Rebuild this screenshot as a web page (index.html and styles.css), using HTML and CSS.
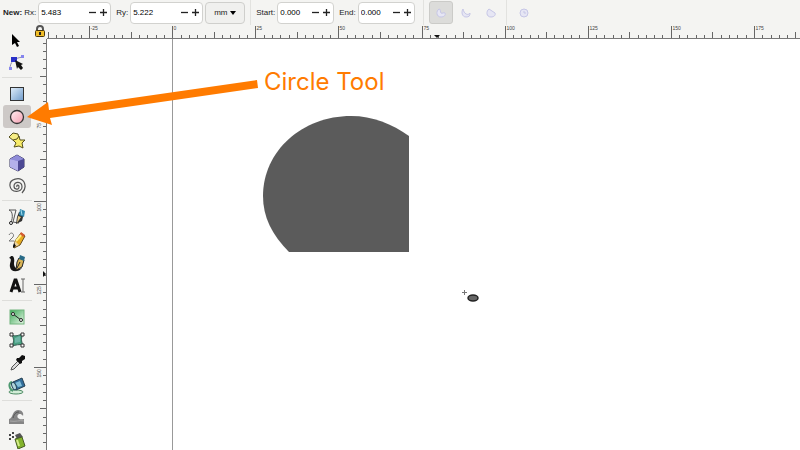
FILE: index.html
```html
<!DOCTYPE html>
<html lang="en">

<head>
	<title>Circle Tool</title>
	<meta charset="UTF-8">
	<meta name="viewport" content="width=device-width, initial-scale=1.0">
	<link rel="stylesheet" href="styles.css">
</head>

<body>
	<div class="app">
		<form class="options">
			<b class="mode">New:</b>
			<label for="rx">Rx:</label>
			<div class="spin wide">
				<input type="text" id="rx" value="5.483">
				<button type="button" aria-label="Decrease Rx"><svg viewBox="0 0 9 9"><path d="M1 4.5h7" /></svg></button>
				<button type="button" aria-label="Increase Rx"><svg viewBox="0 0 9 9"><path d="M1 4.5h7M4.5 1v7" /></svg></button>
			</div>
			<label for="ry">Ry:</label>
			<div class="spin wide">
				<input type="text" id="ry" value="5.222">
				<button type="button" aria-label="Decrease Ry"><svg viewBox="0 0 9 9"><path d="M1 4.5h7" /></svg></button>
				<button type="button" aria-label="Increase Ry"><svg viewBox="0 0 9 9"><path d="M1 4.5h7M4.5 1v7" /></svg></button>
			</div>
			<div class="unit">
				<select aria-label="Unit">
					<option>mm</option>
					<option>px</option>
				</select>
				<svg viewBox="0 0 6 4"><path d="M0 0h6L3 4z" /></svg>
			</div>
			<span class="divider"></span>
			<label for="start">Start:</label>
			<div class="spin">
				<input type="text" id="start" value="0.000">
				<button type="button" aria-label="Decrease start"><svg viewBox="0 0 9 9"><path d="M1 4.5h7" /></svg></button>
				<button type="button" aria-label="Increase start"><svg viewBox="0 0 9 9"><path d="M1 4.5h7M4.5 1v7" /></svg></button>
			</div>
			<label for="end">End:</label>
			<div class="spin">
				<input type="text" id="end" value="0.000">
				<button type="button" aria-label="Decrease end"><svg viewBox="0 0 9 9"><path d="M1 4.5h7" /></svg></button>
				<button type="button" aria-label="Increase end"><svg viewBox="0 0 9 9"><path d="M1 4.5h7M4.5 1v7" /></svg></button>
			</div>
			<span class="divider"></span>
			<div class="arcs">
				<button type="button" class="arc active" aria-label="Slice"><svg viewBox="0 0 10 10"><path d="M3 1C0 3 0 9 5 9c3 0 5-2 4-4-1-1-3 1-4 0S5 1 3 1z" /></svg></button>
				<button type="button" class="arc" aria-label="Arc"><svg viewBox="0 0 10 10"><path d="M2 1C0 4 1 9 5 9c3 0 4-1 4-4C7 8 3 6 2 1z" /></svg></button>
				<button type="button" class="arc" aria-label="Chord"><svg viewBox="0 0 10 10"><path d="M3 1C0 3 0 9 5 9c3 0 5-2 4-4z" /></svg></button>
			</div>
			<span class="divider"></span>
			<button type="button" class="arc" aria-label="Make whole"><svg viewBox="0 0 10 10"><circle cx="5" cy="5" r="4" /><path d="M5 3v2h2" /></svg></button>
		</form>

		<nav class="tools">
			<button class="tool" aria-label="Selector"><svg viewBox="0 0 18 18"><path d="M4 3l8 8-3 0 2 4-2 1-2-4-3 2z" fill="#000" /></svg></button>
			<button class="tool" aria-label="Node tool"><svg viewBox="0 0 18 18"><path d="M2 15C2 8 6 4 15 3" fill="none" stroke="#8a8ab0" /><path d="M3 3h6v5H3z" fill="#2930c8" /><path d="M1 13h3v3H1zM13 1h3v3h-3z" fill="#8585ef" /><path d="M7 6l8 4-2 1 2 3-2 2-3-3-1 2z" fill="#111" /></svg></button>
			<span class="line"></span>
			<button class="tool" aria-label="Rectangle tool"><svg viewBox="0 0 18 18"><rect x="2.500" y="2.500" width="13" height="13" fill="url(#blue)" stroke="#333" /></svg></button>
			<button class="tool active" aria-label="Circle tool"><svg viewBox="0 0 18 18"><circle cx="9" cy="9" r="6.500" fill="url(#pink)" stroke="#333" stroke-width="1.300" /></svg></button>
			<button class="tool" aria-label="Star tool"><svg viewBox="0 0 18 18"><path d="M5 2l5 1 1 5-5 2-5-4z" fill="#f7ee85" stroke="#55501c" /><path d="M11 5l1 4 5 0-3 3 1 5-4-2-5 1 2-4-3-3 4-1z" fill="#f8ec6a" stroke="#55501c" /></svg></button>
			<button class="tool" aria-label="3D box tool"><svg viewBox="0 0 18 18"><path d="M9 1l7 4v8l-6 4-8-4V5z" fill="#8582d2" stroke="#35335f" /><path d="M2 5l8 2v10l-8-4z" fill="#b3b0ea" /><path d="M2 5l7-4 7 4-6 2z" fill="#8f8cd8" /><path d="M10 7l6-2v8l-6 4z" fill="#4d4994" /></svg></button>
			<button class="tool" aria-label="Spiral tool"><svg viewBox="0 0 18 18"><path d="M9 10C8 8 11 7 11 10C11 13 6 13 6 9C6 4 14 4 14 10C14 16 3 16 2 9C1 2 12 -1 16 5C18 9 17 13 14 16" fill="none" stroke="#555" stroke-width="1.200" /></svg></button>
			<span class="line"></span>
			<button class="tool" aria-label="Pen tool"><svg viewBox="0 0 18 18"><path d="M1 2h7L5 14l6 1M1 2c4 1 4 8 2 12" fill="none" stroke="#555" /><circle cx="3" cy="15" r="1.500" fill="#fff" stroke="#222" /><path d="M11 4l5 1-2 8-6 3 1-7z" fill="#333" /><path d="M10 8l3 1-4 6z" fill="#eed28d" /><path d="M12 1l5 2-1 6-5-2z" fill="#3289ad" /><path d="M13 2l1 5" stroke="#a5dced" /></svg></button>
			<button class="tool" aria-label="Pencil tool"><svg viewBox="0 0 18 18"><path d="M1 4c2-4 6-1 4 2L1 10h5" fill="none" stroke="#777" /><path d="M7 10l6-8 4 3-5 9-6 3z" fill="#e8ae20" stroke="#654a20" /><path d="M8 10l6-7" stroke="#fff18b" stroke-width="2" /><path d="M13 1l4 3-2 2-3-3z" fill="#d65c32" /><path d="M7 10l4 4-5 2z" fill="#ecd4a0" /><path d="M5 15l1-3 2 3-3 2z" fill="#111" /></svg></button>
			<button class="tool" aria-label="Calligraphy tool"><svg viewBox="0 0 18 18"><path d="M1 4c4-5 6 0 5 5 0 4 2 7 8 5-3 4-11 5-12-1C1 9 5 5 1 4z" fill="#151515" /><path d="M11 4l5 2-2 7-6 3 1-8z" fill="#d9b456" stroke="#222" /><path d="M12 1l5 2-1 4-5-2z" fill="#286b88" /><path d="M9 14l3-6" stroke="#222" /></svg></button>
			<button class="tool" aria-label="Text tool"><svg viewBox="0 0 18 18"><path d="M3 15l4-12h1l4 12M4 11h7" fill="none" stroke="#111" stroke-width="3" /><path d="M13 2h4M15 2v13M13 15h4" fill="none" stroke="#666" /></svg></button>
			<span class="line"></span>
			<button class="tool" aria-label="Gradient tool"><svg viewBox="0 0 18 18"><rect x="2" y="2" width="14" height="14" fill="url(#green)" stroke="#70b47c" /><path d="M5 6l8 6" stroke="#222" /><circle cx="5" cy="6" r="1.500" fill="#fff" stroke="#222" /><circle cx="13" cy="12" r="1.500" fill="#fff" stroke="#222" /></svg></button>
			<button class="tool" aria-label="Mesh tool"><svg viewBox="0 0 18 18"><path d="M4 4c4 2 6 0 11-1-2 4-2 7 0 11-4-1-7 0-11 1 2-4 2-7 0-11z" fill="#49a181" stroke="#315a50" /><path d="M7 7l5-2v6l-5 1z" fill="#6fb5a6" /><path d="M2 2h3v3H2zM13 2h3v3h-3zM2 13h3v3H2zM13 13h3v3h-3z" fill="#fff" stroke="#333" /></svg></button>
			<button class="tool" aria-label="Dropper tool"><svg viewBox="0 0 18 18"><path d="M3 16l1-3 7-7 2 2-7 7z" fill="#ddd" stroke="#555" /><path d="M9 4l2 0 3-3 3 1 0 3-3 2 0 2-2 1-4-4z" fill="#111" /></svg></button>
			<button class="tool" aria-label="Paint bucket tool"><svg viewBox="0 0 18 18"><ellipse cx="8" cy="15" rx="7" ry="2" fill="#d2edd7" stroke="#4c8a62" /><path d="M4 5c-4 1-3 7 1 9" fill="none" stroke="#4d9970" stroke-width="2" /><path d="M5 5l9-4 3 8-9 4z" fill="#326e9b" stroke="#263f50" /><path d="M7 6l5-2 2 5-4 1z" fill="#83bfd9" /><ellipse cx="6" cy="9" rx="2" ry="4" transform="rotate(-22 6 9)" fill="#b1d5db" stroke="#26485b" /></svg></button>
			<span class="line"></span>
			<button class="tool" aria-label="Tweak tool"><svg viewBox="0 0 18 18"><path d="M1 16v-5c4 0 3-9 9-9 4 0 6 3 5 6-3-4-7-1-5 2 2 2 4 1 6 1v5z" fill="#858585" /><path d="M2 13c6 1 9-1 14 0" fill="none" stroke="#aaa" /><path d="M5 10c1-4 3-6 6-6" fill="none" stroke="#555" /></svg></button>
			<button class="tool" aria-label="Spray tool"><svg viewBox="0 0 18 18"><path d="M1 3h2v2H1zM4 1h2v2H4zM4 5h2v2H4zM1 7h2v2H1z" fill="#444" /><path d="M7 4l5-2 3 4-6 2z" fill="#555" /><path d="M7 8l7-2 3 9-7 3z" fill="#83b32c" stroke="#465c26" /><path d="M9 9l2 6" stroke="#d5ed8c" stroke-width="2" /></svg></button>
		</nav>

		<div class="corner">
			<svg viewBox="0 0 12 14"><path d="M3 7V4c0-4 6-4 6 0v3" fill="none" stroke="#555" stroke-width="2" /><rect x="1.500" y="5.500" width="9" height="6" rx="1" fill="#f0bd28" stroke="#49370b" /><path d="M6 7v3" stroke="#222" stroke-width="2" /></svg>
		</div>
		<svg class="ruler ruler-x" id="rulerX"></svg>
		<svg class="ruler ruler-y" id="rulerY"></svg>

		<main class="canvas">
			<svg class="drawing">
				<path d="M125.500 0v2000" stroke="#999" />
				<path d="M242 213C225 196 216 178 216 157C216 112 255 77 304 77C326 77 345 85 362 97V213Z" fill="#5b5b5b" />
				<path d="M417.500 251v5M415 253.500h5" stroke="#777" />
				<ellipse cx="426" cy="259" rx="5" ry="3" fill="#666" stroke="#222" stroke-width="1.500" />
			</svg>
		</main>

		<!-- callout over the tool box and the canvas -->
		<div class="callout">
			<svg viewBox="0 0 232 50"><path d="M0 38L21 23L22 31L230 1L231 9L23 39L25 46Z" fill="#ff7b00" /></svg>
			<span>Circle Tool</span>
		</div>
	</div>

	<svg class="defs">
		<linearGradient id="blue" x2="1" y2="1"><stop stop-color="#e2effb" /><stop offset="1" stop-color="#6f9bcb" /></linearGradient>
		<linearGradient id="pink" x2="1" y2="1"><stop stop-color="#fff1f3" /><stop offset="1" stop-color="#f59daf" /></linearGradient>
		<linearGradient id="green" x2="1" y2="1"><stop stop-color="#37a653" /><stop offset="1" stop-color="#e9f7e8" /></linearGradient>
	</svg>
	<script src="rulers.js"></script>
</body>

</html>
```
FILE: styles.css
```css
* {
	box-sizing: border-box;
}

body {
	font-family: "Liberation Sans", Arial, sans-serif;
	font-size: 8px;
	color: #222;
	margin: 0;
	overflow: hidden;
}

button,
input,
select {
	font: inherit;
	color: inherit;
	margin: 0;
	padding: 0;
	border: 0;
	background: none;
}

svg {
	display: block;
}

.app {
	position: relative;
	display: grid;
	grid-template-columns: 34px 13px 1fr;
	grid-template-rows: 25px 14px 1fr;
	height: 100vh;
	background-color: #f4f4f2;
}

.options {
	grid-column: 1 / -1;
	display: flex;
	align-items: center;
	gap: 2px;
	padding-left: 3px;
	white-space: nowrap;
}

.spin {
	display: flex;
	align-items: center;
	width: 57px;
	height: 22px;
	margin-right: 3px;
	padding: 0 1px 0 2px;
	border: 1px solid #d2d2cf;
	border-radius: 4px;
	background-color: #fff;
}

.spin.wide {
	width: 73px;
}

.spin input {
	flex: 1;
	min-width: 0;
	color: #000;
}

.spin button {
	width: 11px;
	height: 20px;
	padding: 0 1px;
}

.spin button svg {
	width: 9px;
	height: 9px;
	fill: none;
	stroke: #222;
	stroke-width: 1.3;
}

.unit {
	position: relative;
	width: 40px;
	height: 22px;
	margin-left: -3px;
}

.unit select {
	width: 100%;
	height: 100%;
	padding-left: 8px;
	border: 1px solid #cfcfcc;
	border-radius: 4px;
	background-color: #f0f0ee;
	appearance: none;
}

.unit svg {
	position: absolute;
	top: 9px;
	right: 9px;
	width: 6px;
	height: 4px;
	pointer-events: none;
}

.divider {
	width: 1px;
	height: 25px;
	margin: 0 3px;
	background-color: #e2e2df;
}

.arcs {
	display: flex;
	gap: 1px;
	margin-right: -2px;
}

.arc {
	display: flex;
	align-items: center;
	justify-content: center;
	width: 24px;
	height: 23px;
	border-radius: 3px;
}

.arc.active {
	border: 1px solid #cbcbc8;
	background-color: #dcdcda;
}

.arc svg {
	width: 10px;
	height: 10px;
	fill: #e6e6f4;
	stroke: #c6c6e6;
}

.tools {
	grid-row: 2 / 4;
	display: flex;
	flex-direction: column;
	align-items: center;
	min-height: 0;
	padding-top: 3px;
	overflow: hidden;
}

.tool {
	display: flex;
	flex-shrink: 0;
	align-items: center;
	justify-content: center;
	width: 28px;
	height: 23px;
	border-radius: 3px;
}

.tool.active {
	background-color: #cdc9c7;
}

.tool svg {
	width: 18px;
	height: 18px;
}

.line {
	flex-shrink: 0;
	width: 30px;
	height: 8px;
	border-bottom: 4px solid transparent;
	border-top: 3px solid transparent;
	background-color: #dededb;
	background-clip: padding-box;
}

.corner svg {
	width: 12px;
	height: 14px;
}

.ruler {
	width: 100%;
	height: 100%;
	min-height: 0;
	overflow: hidden;
	font-size: 5px;
	fill: #444;
	stroke: none;
}

.ruler path {
	fill: none;
	stroke: #666;
}

.ruler .marker {
	fill: #111;
	stroke: none;
}

.ruler-x {
	border-bottom: 1px solid #777;
}

.ruler-y {
	grid-column: 2;
	grid-row: 3;
	border-right: 1px solid #777;
}

.canvas {
	grid-column: 3;
	grid-row: 3;
	min-height: 0;
	overflow: hidden;
	background-color: #fff;
}

.drawing {
	width: 100%;
	height: 100%;
}

.callout {
	position: absolute;
	left: 27px;
	top: 79px;
	display: flex;
	gap: 5px;
	color: #ff7b00;
	font-family: Inter, sans-serif;
	font-size: 24px;
	line-height: 30px;
}

.callout svg {
	width: 232px;
	height: 50px;
}

.callout span {
	margin-top: -12px;
}

.defs {
	position: absolute;
	width: 0;
	height: 0;
}
```
FILE: rulers.js
```js
const STEP = 8.31; // px between small ticks, ten of them make 25 mm
const rulerX = document.querySelector('#rulerX');
const rulerY = document.querySelector('#rulerY');

function tickLength(i) {
	if (i % 10 === 0) return 12;
	return i % 5 === 0 ? 6 : 3;
}

function drawX(svg, origin) {
	const width = svg.getBoundingClientRect().width;
	let d = '';
	let labels = '';
	for (let i = -15; origin + i * STEP < width; i++) {
		const x = Math.floor(origin + i * STEP) + 0.5;
		d += `M${x} 13v${-tickLength(i)}`;
		if (i % 10 === 0 && x > 0 && x + 10 < width) {
			labels += `<text x="${x + 1}" y="5">${i * 2.5}</text>`;
		}
	}
	svg.innerHTML = `<path d="${d}"/>${labels}<path class="marker" d="M387 10h6l-3 3z"/>`;
}

function drawY(svg, origin) {
	const height = svg.getBoundingClientRect().height;
	let d = '';
	let labels = '';
	for (let i = 0; origin + i * STEP < height; i++) {
		const y = Math.floor(origin + i * STEP) + 0.5;
		d += `M12 ${y}h${-tickLength(i)}`;
		if (i % 10 === 0 && y > 0 && y + 10 < height) {
			labels += `<text transform="translate(7 ${y + 10}) rotate(-90)">${50 + i * 2.5}</text>`;
		}
	}
	svg.innerHTML = `<path d="${d}"/>${labels}<path class="marker" d="M9 232v6l3-3z"/>`;
}

function drawRulers() {
	drawX(rulerX, 125.7);
	drawY(rulerY, -4);
}

window.addEventListener('resize', drawRulers);
drawRulers();
```
